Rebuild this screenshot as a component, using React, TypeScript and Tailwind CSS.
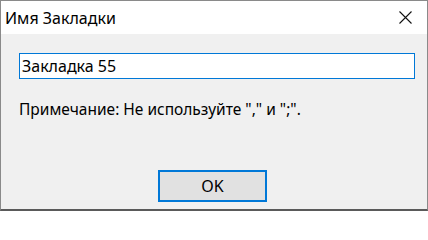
import React from 'react';

const App = () => {
  return (
    <div
      className="w-[428px] h-[211px] flex flex-col border border-[#8a8a8a] border-b-2 border-b-[#5a5a5a] bg-[#f0f0f0] text-black overflow-hidden"
      style={{ fontFamily: '"Noto Sans", "Open Sans", sans-serif' }}
    >
      {/* Title bar */}
      <div className="h-[33px] bg-white flex items-center justify-between shrink-0">
        <span className="pl-[4px] text-[16px] leading-none">Имя Закладки</span>
        <button className="w-[44px] h-[33px] flex items-center justify-center">
          <svg width="13" height="13" viewBox="0 0 13 13">
            <path d="M0.5 0.5 L12.5 12.5 M12.5 0.5 L0.5 12.5" stroke="#111" strokeWidth="1.1" fill="none" />
          </svg>
        </button>
      </div>

      {/* Body */}
      <div className="flex-1 flex flex-col px-[18px] pt-[19px]">
        <div className="h-[26px] w-[396px] bg-white border border-[#0078d7] flex items-center px-[2px]">
          <span className="text-[16px] leading-none">Закладка 55</span>
        </div>
        <p className="mt-[20px] text-[15.5px] leading-[20px]">Примечание: Не используйте "," и ";".</p>
        <div className="flex justify-center mt-[51px]">
          <button className="ml-[-3px] w-[109px] h-[32px] bg-[#e1e1e1] border-2 border-[#0078d7] text-[16px] leading-none flex items-center justify-center">
            OK
          </button>
        </div>
      </div>
    </div>
  );
};

export default App;
